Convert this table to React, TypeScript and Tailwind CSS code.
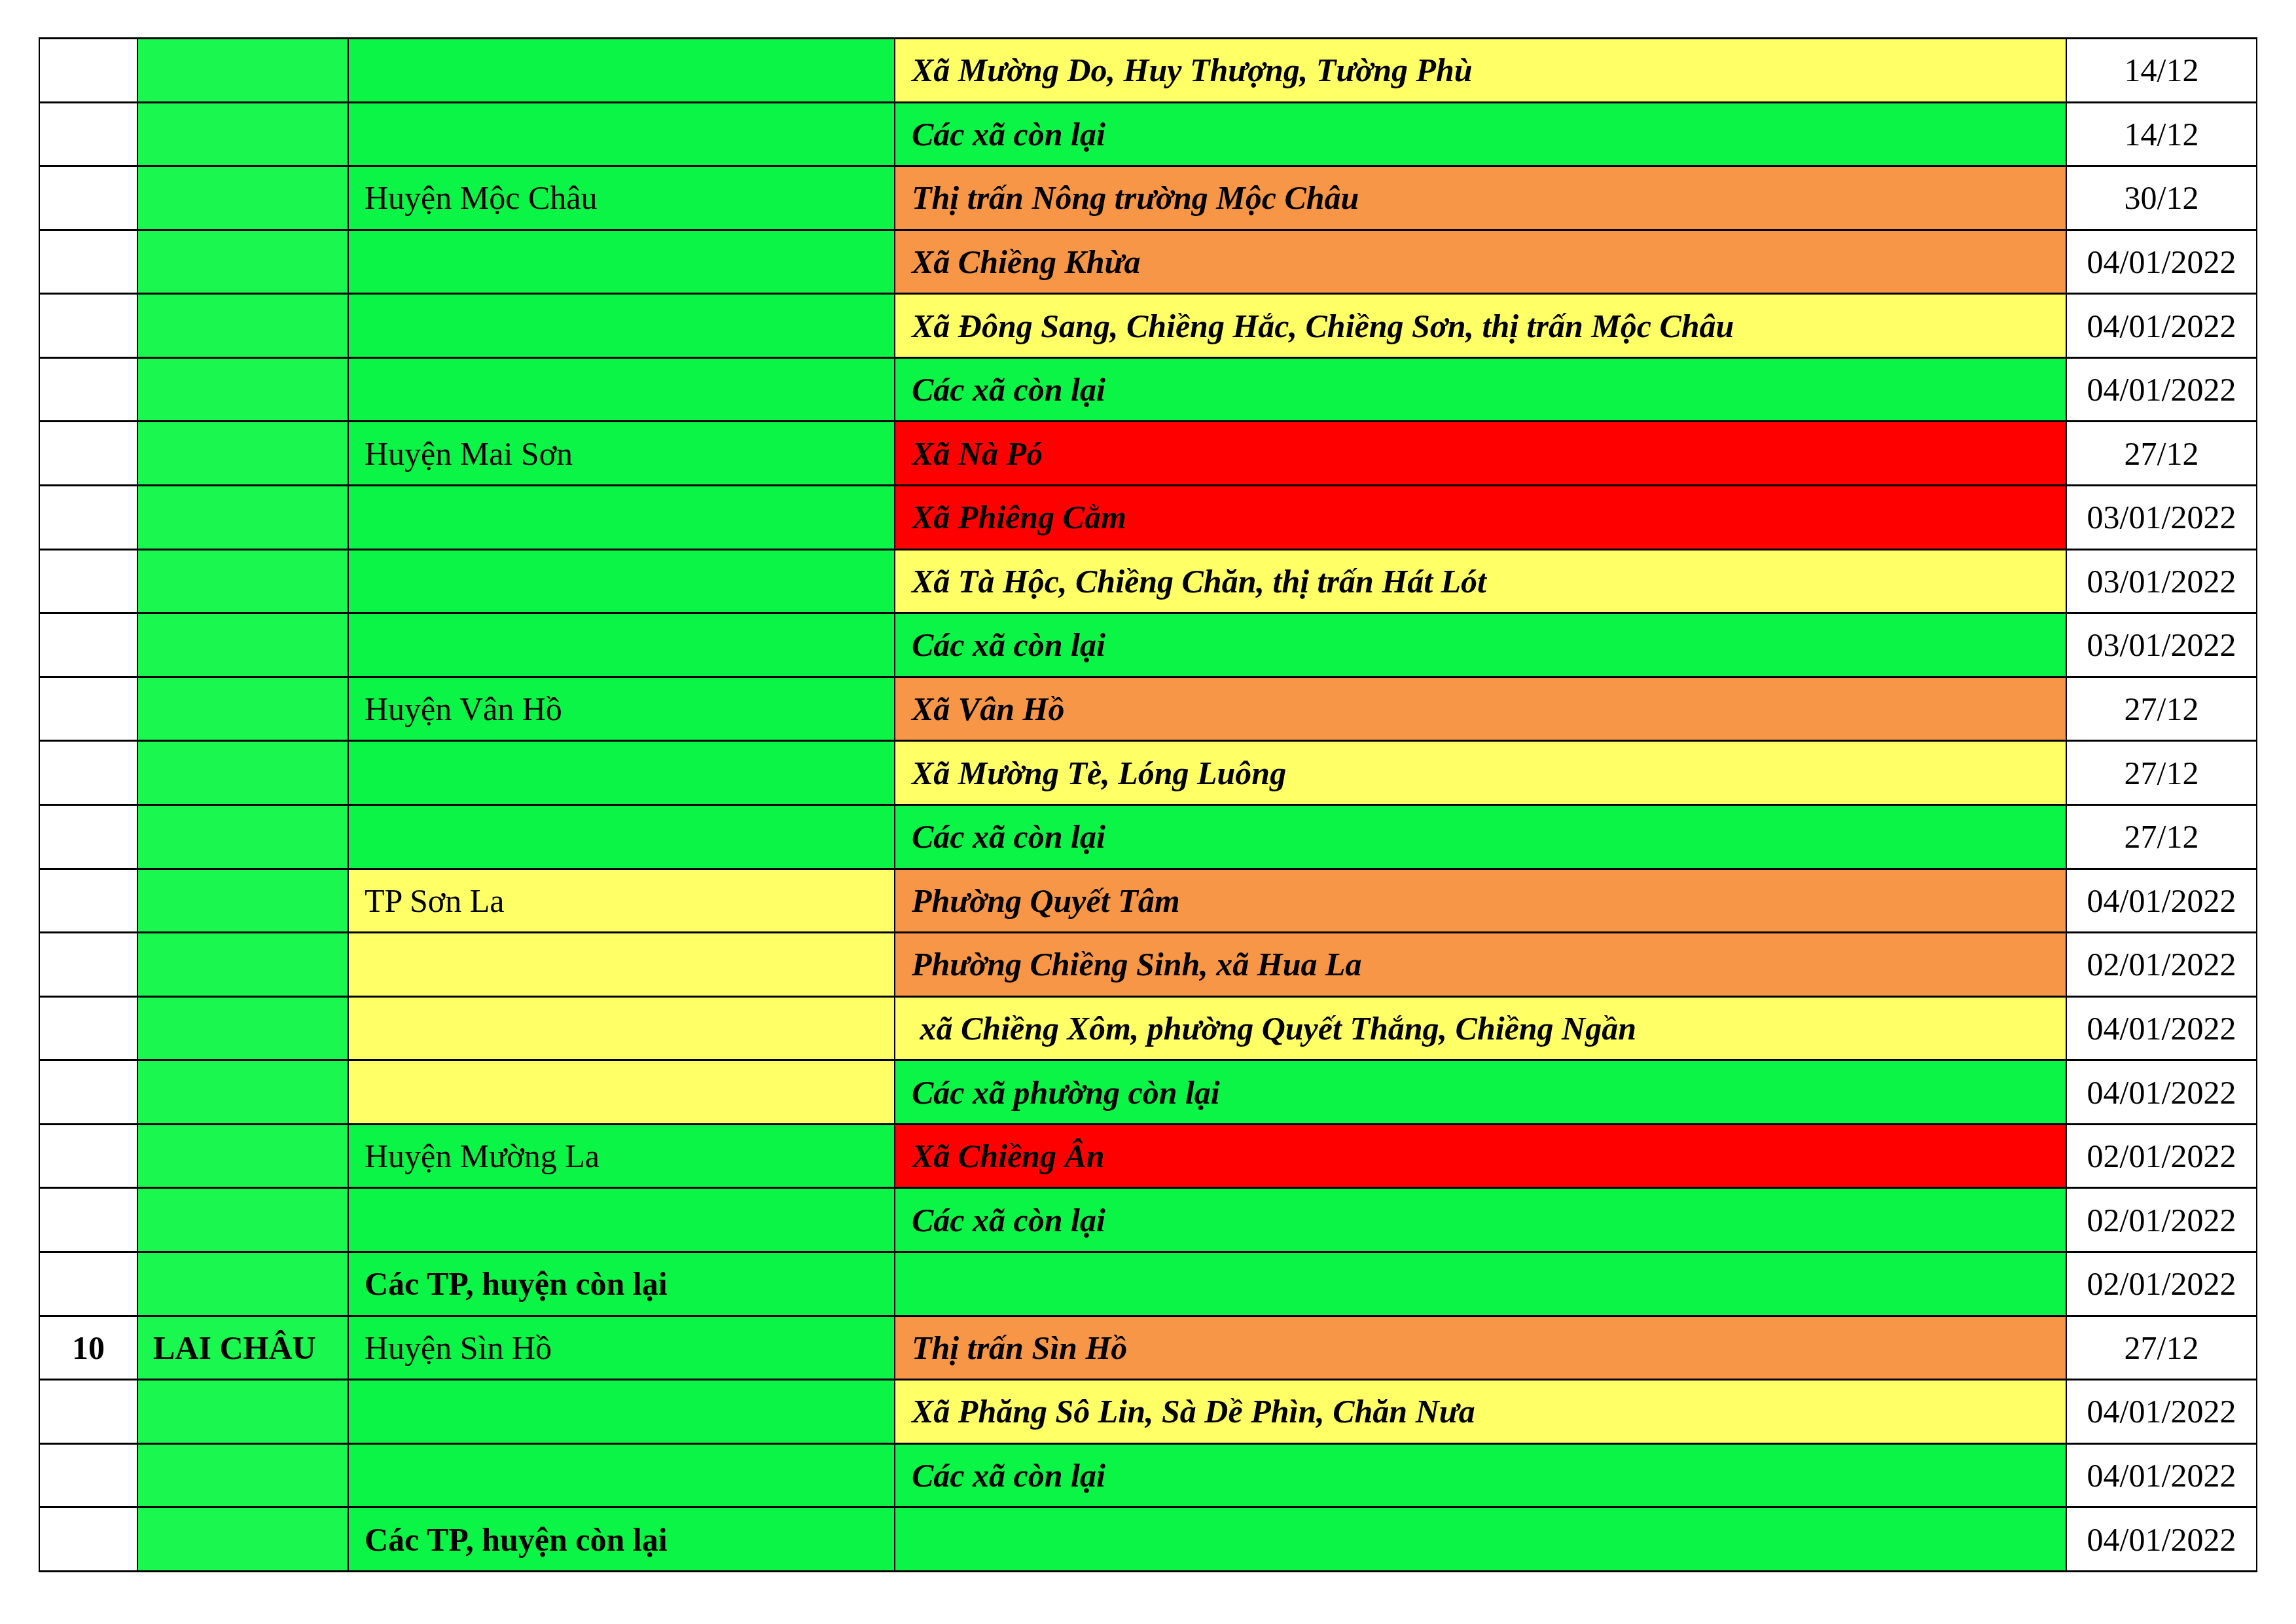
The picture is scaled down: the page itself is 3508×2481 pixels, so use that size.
type Bg = 'g' | 'y' | 'o' | 'r'

const bgClass: Record<Bg, string> = {
  g: 'bg-[#0bf546]',
  y: 'bg-[#ffff66]',
  o: 'bg-[#f79646]',
  r: 'bg-[#ff0000]',
}

type Row = {
  no?: string
  province?: string
  district: string
  districtBg: Bg
  districtBold?: boolean
  commune: string
  communeBg: Bg
  date: string
}

const rows: Row[] = [
  { district: '', districtBg: 'g', commune: 'Xã Mường Do, Huy Thượng, Tường Phù', communeBg: 'y', date: '14/12' },
  { district: '', districtBg: 'g', commune: 'Các xã còn lại', communeBg: 'g', date: '14/12' },
  { district: 'Huyện Mộc Châu', districtBg: 'g', commune: 'Thị trấn Nông trường Mộc Châu', communeBg: 'o', date: '30/12' },
  { district: '', districtBg: 'g', commune: 'Xã Chiềng Khừa', communeBg: 'o', date: '04/01/2022' },
  { district: '', districtBg: 'g', commune: 'Xã Đông Sang, Chiềng Hắc, Chiềng Sơn, thị trấn Mộc Châu', communeBg: 'y', date: '04/01/2022' },
  { district: '', districtBg: 'g', commune: 'Các xã còn lại', communeBg: 'g', date: '04/01/2022' },
  { district: 'Huyện Mai Sơn', districtBg: 'g', commune: 'Xã Nà Pó', communeBg: 'r', date: '27/12' },
  { district: '', districtBg: 'g', commune: 'Xã Phiêng Cằm', communeBg: 'r', date: '03/01/2022' },
  { district: '', districtBg: 'g', commune: 'Xã Tà Hộc, Chiềng Chăn, thị trấn Hát Lót', communeBg: 'y', date: '03/01/2022' },
  { district: '', districtBg: 'g', commune: 'Các xã còn lại', communeBg: 'g', date: '03/01/2022' },
  { district: 'Huyện Vân Hồ', districtBg: 'g', commune: 'Xã Vân Hồ', communeBg: 'o', date: '27/12' },
  { district: '', districtBg: 'g', commune: 'Xã Mường Tè, Lóng Luông', communeBg: 'y', date: '27/12' },
  { district: '', districtBg: 'g', commune: 'Các xã còn lại', communeBg: 'g', date: '27/12' },
  { district: 'TP Sơn La', districtBg: 'y', commune: 'Phường Quyết Tâm', communeBg: 'o', date: '04/01/2022' },
  { district: '', districtBg: 'y', commune: 'Phường Chiềng Sinh, xã Hua La', communeBg: 'o', date: '02/01/2022' },
  { district: '', districtBg: 'y', commune: '\u00a0xã Chiềng Xôm, phường Quyết Thắng, Chiềng Ngần', communeBg: 'y', date: '04/01/2022' },
  { district: '', districtBg: 'y', commune: 'Các xã phường còn lại', communeBg: 'g', date: '04/01/2022' },
  { district: 'Huyện Mường La', districtBg: 'g', commune: 'Xã Chiềng Ân', communeBg: 'r', date: '02/01/2022' },
  { district: '', districtBg: 'g', commune: 'Các xã còn lại', communeBg: 'g', date: '02/01/2022' },
  { district: 'Các TP, huyện còn lại', districtBg: 'g', districtBold: true, commune: '', communeBg: 'g', date: '02/01/2022' },
  { no: '10', province: 'LAI CHÂU', district: 'Huyện Sìn Hồ', districtBg: 'g', commune: 'Thị trấn Sìn Hồ', communeBg: 'o', date: '27/12' },
  { district: '', districtBg: 'g', commune: 'Xã Phăng Sô Lin, Sà Dề Phìn, Chăn Nưa', communeBg: 'y', date: '04/01/2022' },
  { district: '', districtBg: 'g', commune: 'Các xã còn lại', communeBg: 'g', date: '04/01/2022' },
  { district: 'Các TP, huyện còn lại', districtBg: 'g', districtBold: true, commune: '', communeBg: 'g', date: '04/01/2022' },
]

const cell = 'border-x-2 border-y-[3px] border-black align-middle whitespace-nowrap'

export default function App() {
  return (
    <div
      className="w-[3508px] h-[2481px] bg-white pt-[57px] pl-[59px] text-black text-[50px] leading-none"
      style={{ fontFamily: '"Liberation Serif", "Times New Roman", serif' }}
    >
      <table className="table-fixed border-collapse w-[3388px]">
        <colgroup>
          <col className="w-[150px]" />
          <col className="w-[322px]" />
          <col className="w-[835px]" />
          <col className="w-[1790px]" />
          <col className="w-[291px]" />
        </colgroup>
        <tbody>
          {rows.map((r, i) => (
            <tr key={i} className="h-[97.58px]">
              <td className={`${cell} bg-white text-center font-bold`}>{r.no}</td>
              <td className={`${cell} bg-[#1af84f] pl-[23px] font-bold`}>{r.province}</td>
              <td className={`${cell} ${bgClass[r.districtBg]} pl-[24px] ${r.districtBold ? 'font-bold' : ''}`}>
                {r.district}
              </td>
              <td className={`${cell} ${bgClass[r.communeBg]} pl-[25px] font-bold italic`}>{r.commune}</td>
              <td className={`${cell} bg-white text-center`}>{r.date}</td>
            </tr>
          ))}
        </tbody>
      </table>
    </div>
  )
}
